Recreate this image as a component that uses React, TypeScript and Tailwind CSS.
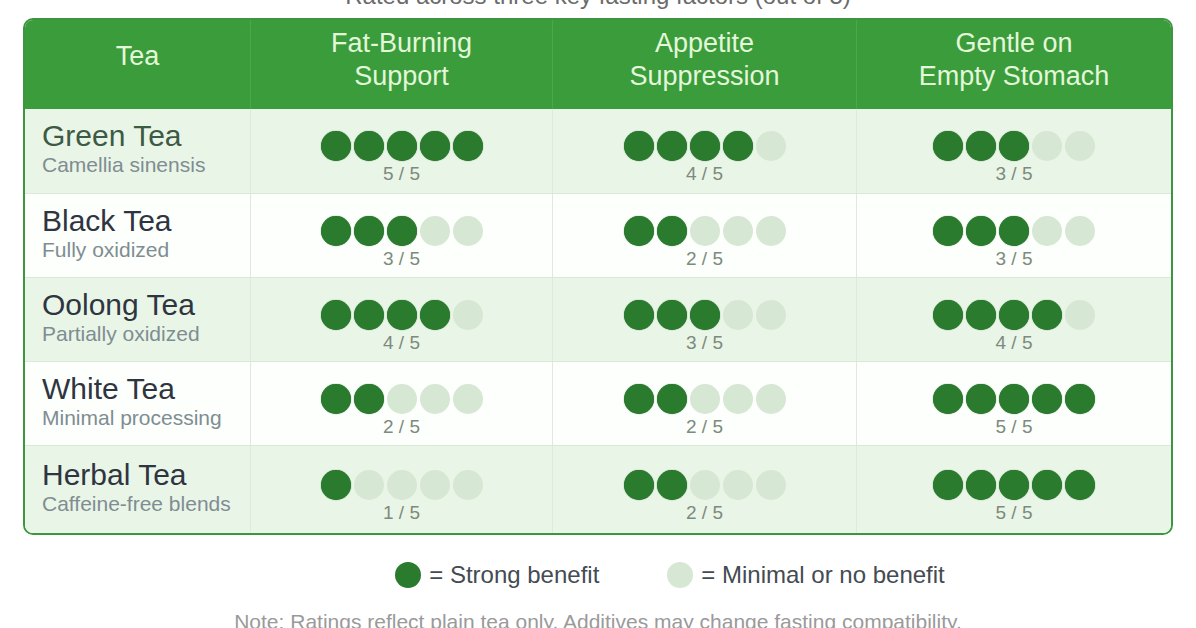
import React from "react";

const rows = [
  { name: "Green Tea", sub: "Camellia sinensis", r: [5, 4, 3], alt: true, nameColor: "text-[#3d5a44]", h: "h-[85px]" },
  { name: "Black Tea", sub: "Fully oxidized", r: [3, 2, 3], alt: false, nameColor: "text-[#2f3540]", h: "h-[84px]" },
  { name: "Oolong Tea", sub: "Partially oxidized", r: [4, 3, 4], alt: true, nameColor: "text-[#2f3540]", h: "h-[84px]" },
  { name: "White Tea", sub: "Minimal processing", r: [2, 2, 5], alt: false, nameColor: "text-[#2f3540]", h: "h-[84px]" },
  { name: "Herbal Tea", sub: "Caffeine-free blends", r: [1, 2, 5], alt: true, nameColor: "text-[#2f3540]", h: "h-[87px]" },
];

function Dots({ n }: { n: number }) {
  return (
    <div className="flex flex-col items-center">
      <div className="flex gap-[3px]">
        {[0, 1, 2, 3, 4].map((i) => (
          <div
            key={i}
            className={
              i < n
                ? "w-[30px] h-[30px] rounded-full bg-[#2a7b2e] shadow-[0_0_1px_#1f5f22]"
                : "w-[30px] h-[30px] rounded-full bg-[#d6e7d3]"
            }
          />
        ))}
      </div>
      <div className="mt-[2px] text-[19px] leading-[22px] text-[#7d8a7d] font-medium">{n} / 5</div>
    </div>
  );
}

export default function App() {
  return (
    <div className="w-[1196px] h-[628px] overflow-hidden bg-white flex flex-col items-center" style={{ fontFamily: '"Liberation Sans", Arial, sans-serif' }}>
      <div className="h-[18px] w-full flex justify-center items-end overflow-hidden shrink-0">
        <div className="text-[24px] leading-[28px] text-[#6b6b6b] mb-[8px]">Rated across three key fasting factors (out of 5)</div>
      </div>
      <div className="w-[1150px] shrink-0 border-2 border-[#3d963f] rounded-[10px] overflow-hidden">
        <div className="grid grid-cols-[226px_302px_304px_1fr] bg-[#3b9c3b] h-[89px] text-[#e3f7da] text-[27px] leading-[33px] text-center">
          <div className="flex items-center justify-center pb-[16px] border-r border-[#4aa84a]">Tea</div>
          <div className="flex items-center justify-center pb-[10px] border-r border-[#4aa84a]">Fat-Burning<br />Support</div>
          <div className="flex items-center justify-center pb-[10px] border-r border-[#4aa84a]">Appetite<br />Suppression</div>
          <div className="flex items-center justify-center pb-[10px]">Gentle on<br />Empty Stomach</div>
        </div>
        {rows.map((row, idx) => (
          <div
            key={row.name}
            className={`grid grid-cols-[226px_302px_304px_1fr] ${row.h} ${row.alt ? "bg-[#e9f5e7]" : "bg-[#fcfffc]"} ${idx < rows.length - 1 ? "border-b border-[#d9e8d7]" : ""}`}
          >
            <div className="flex flex-col justify-center pl-[17px] pb-[4px] border-r border-[#dfeadd]">
              <div className={`text-[30px] leading-[32px] ${row.nameColor}`}>{row.name}</div>
              <div className="text-[21px] leading-[26px] text-[#7f8d92] mt-[0px]">{row.sub}</div>
            </div>
            {row.r.map((v, i) => (
              <div key={i} className={`flex items-center justify-center pt-[14px] ${i < 2 ? "border-r border-[#dfeadd]" : ""}`}>
                <Dots n={v} />
              </div>
            ))}
          </div>
        ))}
      </div>
      <div className="flex items-center gap-[68px] mt-[24px] h-[32px] ml-[144px] shrink-0">
        <div className="flex items-center gap-[8px]">
          <div className="w-[26px] h-[26px] rounded-full bg-[#2a7b2e]" />
          <div className="text-[24px] text-[#444b52]">= Strong benefit</div>
        </div>
        <div className="flex items-center gap-[8px]">
          <div className="w-[26px] h-[26px] rounded-full bg-[#d6e7d3]" />
          <div className="text-[24px] text-[#444b52]">= Minimal or no benefit</div>
        </div>
      </div>
      <div className="mt-[18px] text-[21px] leading-[26px] text-[#9a9a9a] shrink-0">Note: Ratings reflect plain tea only. Additives may change fasting compatibility.</div>
    </div>
  );
}
